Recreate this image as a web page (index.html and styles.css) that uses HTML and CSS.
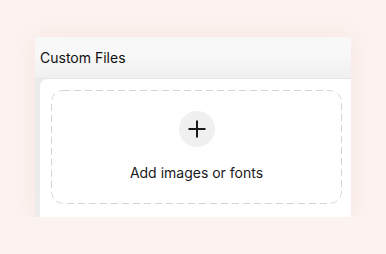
FILE: index.html
```html
<!DOCTYPE html>
<html lang="en">
<head>
  <meta charset="UTF-8" />
  <meta name="viewport" content="width=device-width, initial-scale=1.0" />
  <title>Custom Files</title>
  <link rel="stylesheet" href="styles.css">
</head>
<body>

<section class="panel">
  <header class="panel-head">Custom Files</header>
  <div class="panel-body">
    <div class="card">
      <button class="dropzone" type="button">
        <span class="plus-circle">
          <svg width="20" height="20" viewBox="0 0 20 20" fill="none" stroke="#1a1a1a" stroke-width="2">
            <path d="M10 1.5v17M1.5 10h17" />
          </svg>
        </span>
        <span class="dropzone-label">Add images or fonts</span>
      </button>
    </div>
  </div>
</section>

</body>
</html>
```

FILE: styles.css
```css
body {
  margin: 0;
  padding: 37px 0 0 35px;
  background-color: #fcf2ef;
  font-family: 'Inter', 'Liberation Sans', sans-serif;
  color: #111;
}
.panel {
  width: 316px;
  height: 180px;
  background: #ececec;
  box-shadow: 0 0 24px rgba(200, 150, 140, 0.12);
  display: flex;
  flex-direction: column;
  overflow: hidden;
}
.panel-head {
  height: 41px;
  padding-left: 5px;
  display: flex;
  align-items: center;
  font-size: 14px;
  background: linear-gradient(#f8f8f8 40%, #f0f0f0);
  border-bottom: 1px solid #e6e6e6;
}
.panel-body {
  flex-grow: 1;
  padding-left: 5px;
  display: flex;
}
.card {
  flex-grow: 1;
  background: #fff;
  border-top-left-radius: 8px;
  padding: 11px 9px 0 11px;
}
.dropzone {
  width: 100%;
  height: 114px;
  border: none;
  border-radius: 12px;
  background: #fff url("data:image/svg+xml,%3Csvg xmlns='http://www.w3.org/2000/svg' width='100%25' height='100%25'%3E%3Crect x='0.5' y='0.5' width='calc(100%25 - 1px)' height='calc(100%25 - 1px)' rx='11.5' fill='none' stroke='%23d4d4d4' stroke-width='1' stroke-dasharray='7 4'/%3E%3C/svg%3E");
  display: flex;
  flex-direction: column;
  align-items: center;
  padding: 21px 0 0;
  gap: 17px;
  font-family: inherit;
  cursor: pointer;
}
.plus-circle {
  width: 36px;
  height: 36px;
  border-radius: 50%;
  background: #f0f0f0;
  display: flex;
  align-items: center;
  justify-content: center;
}
.dropzone-label {
  font-size: 14px;
  color: #1a1a1a;
}
```
